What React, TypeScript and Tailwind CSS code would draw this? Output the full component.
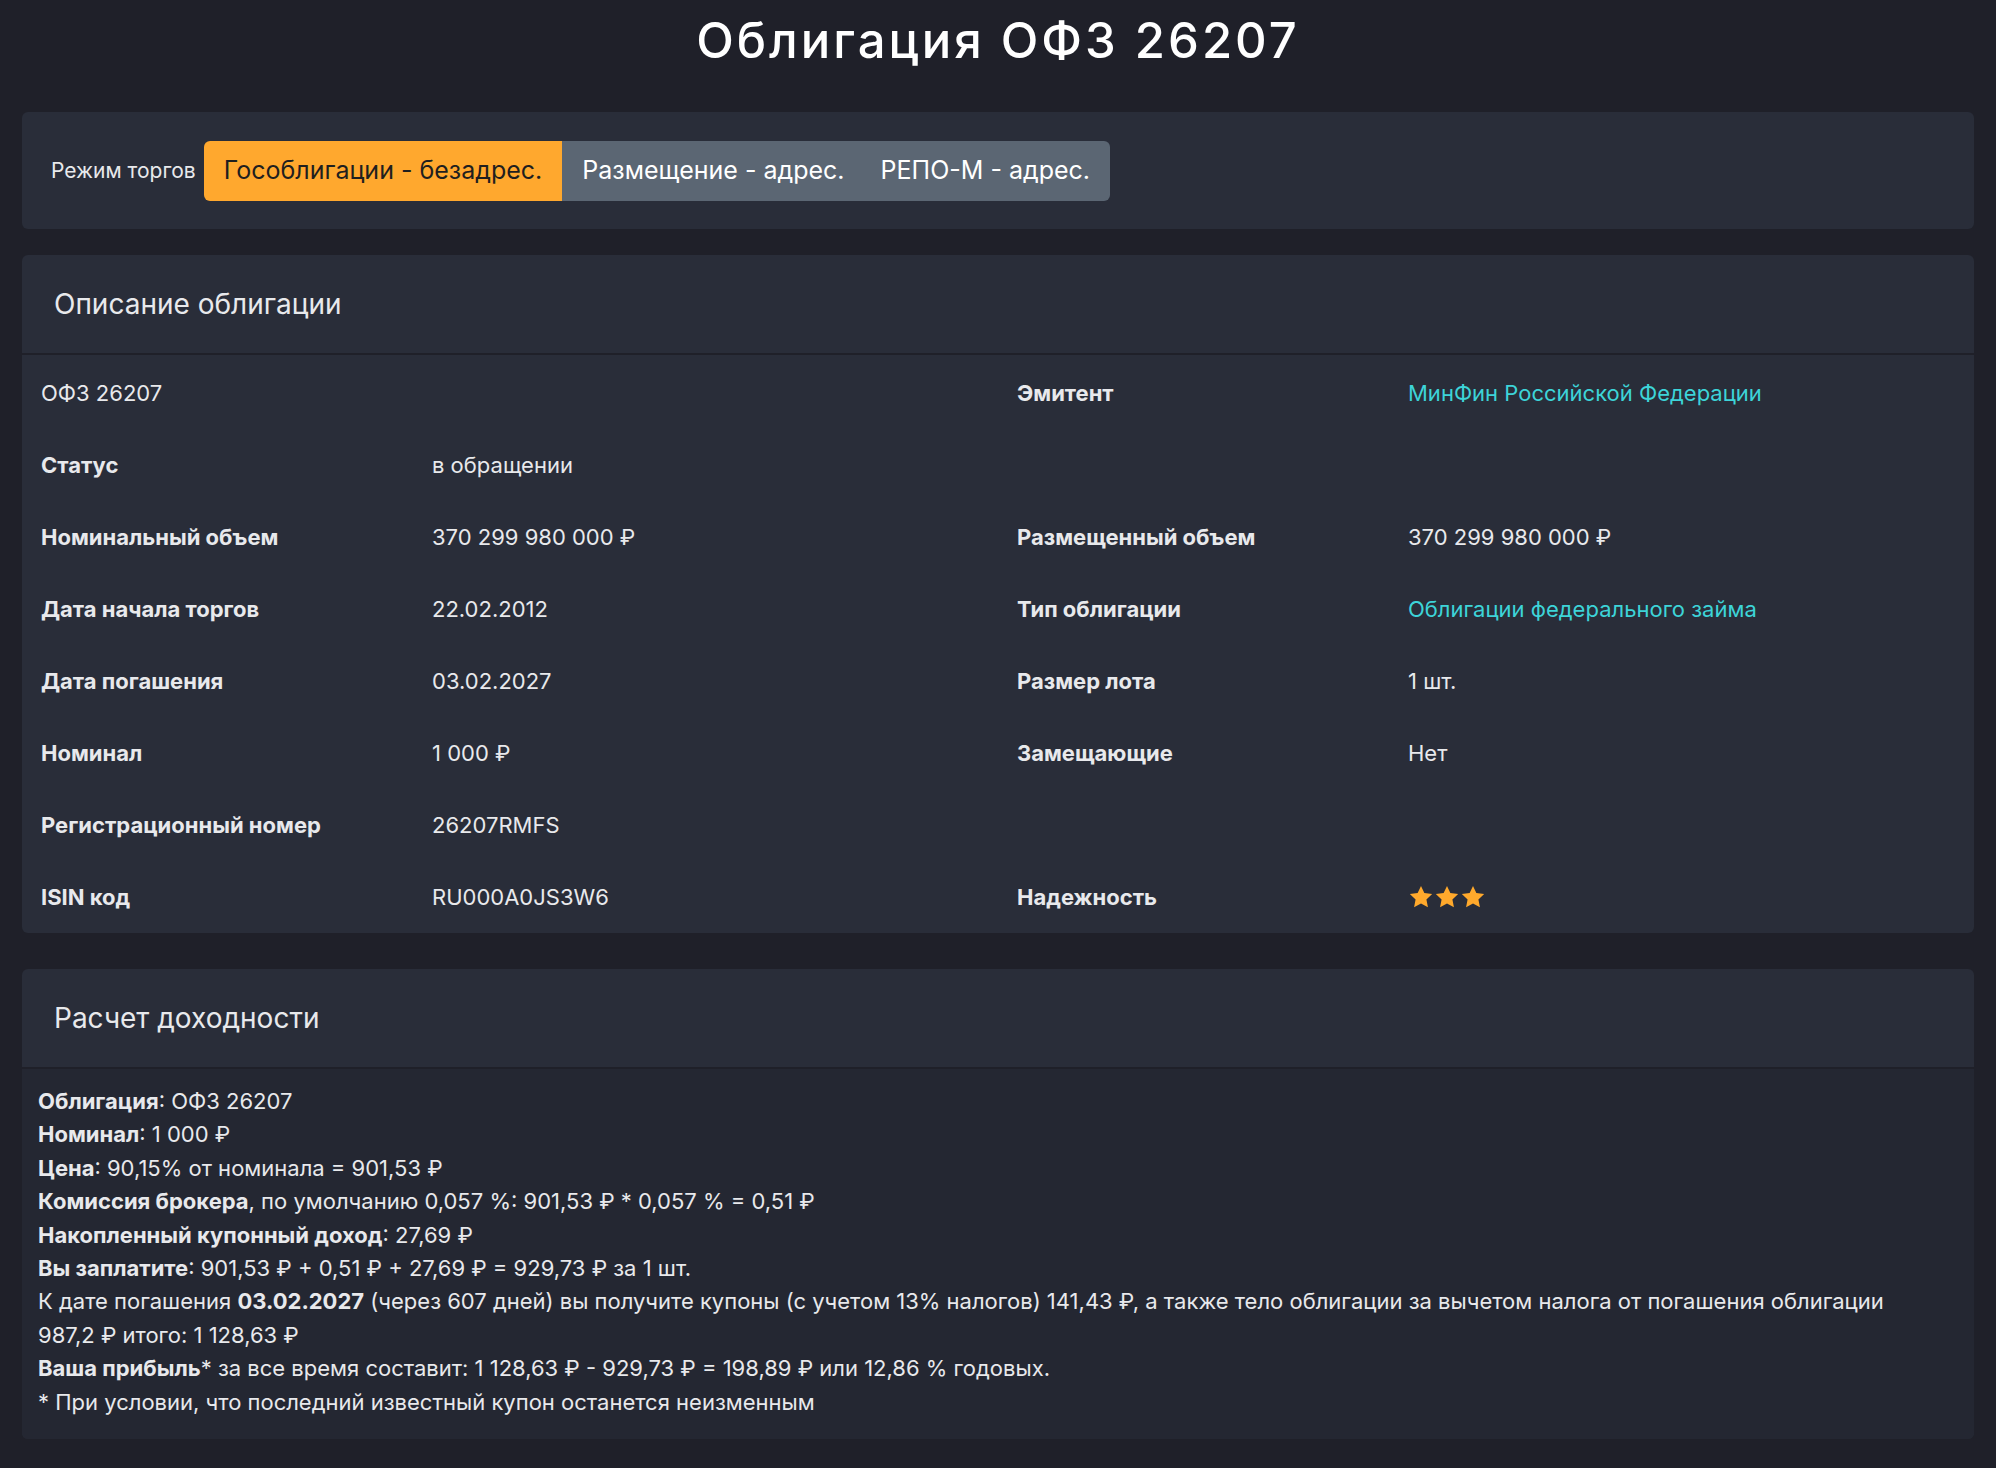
import React from "react";

const F = { fontFamily: "Inter, 'Noto Sans', sans-serif" };

function Star() {
  return (
    <svg width="26" height="26" viewBox="0 0 24 24"><path fill="#ffa92c" d="M12 1.8l3.1 6.6 7.2.9-5.3 5 1.4 7.1L12 17.9l-6.4 3.5 1.4-7.1-5.3-5 7.2-.9z"/></svg>
  );
}

const rows: [string, React.ReactNode, string?, React.ReactNode?][] = [
  ["ОФЗ 26207", "", "Эмитент", <span className="text-[#3dd4d8]">МинФин Российской Федерации</span>],
  ["Статус", "в обращении", "", ""],
  ["Номинальный объем", "370 299 980 000 ₽", "Размещенный объем", "370 299 980 000 ₽"],
  ["Дата начала торгов", "22.02.2012", "Тип облигации", <span className="text-[#3dd4d8]">Облигации федерального займа</span>],
  ["Дата погашения", "03.02.2027", "Размер лота", "1 шт."],
  ["Номинал", "1 000 ₽", "Замещающие", "Нет"],
  ["Регистрационный номер", "26207RMFS", "", ""],
  ["ISIN код", "RU000A0JS3W6", "Надежность", <span className="flex gap-0"><Star/><Star/><Star/></span>],
];

export default function App() {
  return (
    <div style={F} className="min-h-[1468px] bg-[#1f2029] text-[#e8e9ec] px-[22px] pb-[30px]">
      <h1 className="text-center text-white text-[49px] tracking-[3px] font-medium leading-none pt-[16px] pb-[47px]">Облигация ОФЗ 26207</h1>
      <div className="bg-[#292d39] rounded-md h-[117px] flex items-center px-[29px]">
        <span className="text-[21px] mr-[8px]">Режим торгов</span>
        <div className="flex rounded-md overflow-hidden h-[60px] text-[25px]">
          <div className="bg-[#ffa82e] text-[#1f1f1f] px-[20px] flex items-center">Гособлигации - безадрес.</div>
          <div className="bg-[#5b6673] text-white pl-[20px] pr-[18px] flex items-center">Размещение - адрес.</div>
          <div className="bg-[#5b6673] text-white pl-[18px] pr-[20px] flex items-center">РЕПО-М - адрес.</div>
        </div>
      </div>
      <div className="bg-[#292d39] rounded-md mt-[26px]">
        <div className="h-[100px] flex items-center px-[32px] text-[28px] border-b-2 border-[#1f2029]">Описание облигации</div>
        <div className="pt-[2px]">
          {rows.map((r, i) => (
            <div key={i} className="grid grid-cols-[391px_585px_391px_1fr] h-[72px] items-center px-[19px] text-[22px]">
              <div className={i === 0 ? "" : "font-bold"}>{r[0]}</div>
              <div>{r[1]}</div>
              <div className="font-bold">{r[2]}</div>
              <div>{r[3]}</div>
            </div>
          ))}
        </div>
      </div>
      <div className="bg-[#292d39] rounded-md mt-[36px] overflow-hidden">
        <div className="h-[100px] flex items-center px-[32px] text-[28px] border-b-2 border-[#1f2029]">Расчет доходности</div>
        <div className="bg-[#242732] pl-[16px] pr-[80px] pt-[16px] pb-[20px] text-[22px] leading-[33.4px]">
          <div><b>Облигация</b>: ОФЗ 26207</div>
          <div><b>Номинал</b>: 1 000 ₽</div>
          <div><b>Цена</b>: 90,15% от номинала = 901,53 ₽</div>
          <div><b>Комиссия брокера</b>, по умолчанию 0,057 %: 901,53 ₽ * 0,057 % = 0,51 ₽</div>
          <div><b>Накопленный купонный доход</b>: 27,69 ₽</div>
          <div><b>Вы заплатите</b>: 901,53 ₽ + 0,51 ₽ + 27,69 ₽ = 929,73 ₽ за 1 шт.</div>
          <div>К дате погашения <b>03.02.2027</b> (через 607 дней) вы получите купоны (с учетом 13% налогов) 141,43 ₽, а также тело облигации за вычетом налога от погашения облигации 987,2&nbsp;₽ итого: 1 128,63 ₽</div>
          <div><b>Ваша прибыль</b>* за все время составит: 1 128,63 ₽ - 929,73 ₽ = 198,89 ₽ или 12,86 % годовых.</div>
          <div>* При условии, что последний известный купон останется неизменным</div>
        </div>
      </div>
    </div>
  );
}
